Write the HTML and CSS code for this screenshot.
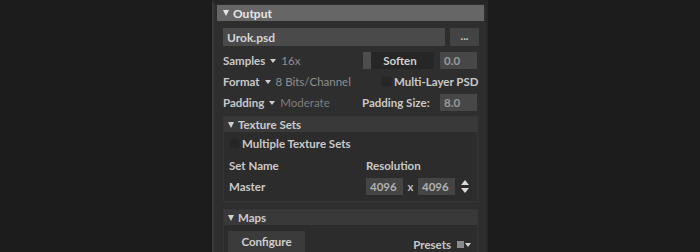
FILE: index.html
```html
<!DOCTYPE html>
<html>
<head>
<meta charset="utf-8">
<link rel="stylesheet" href="styles.css">
</head>
<body>
<div class="stage">
  <div class="panel">
    <div class="sec-head"><span class="tri"></span>Output</div>
    <div class="sec-body">
      <div class="file-row">
        <div class="field file">Urok.psd</div>
        <div class="btn dots">...</div>
      </div>
      <div class="grid-row r-samples">
        <div class="drop"><span class="lbl">Samples</span><span class="caret"></span><span class="val">16x</span></div>
        <div class="slider"><span class="handle"></span><span class="slider-text">Soften</span></div>
        <div class="field num">0.0</div>
      </div>
      <div class="grid-row r-format">
        <div class="drop"><span class="lbl">Format</span><span class="caret"></span><span class="val">8 Bits/Channel</span></div>
        <div class="check-wrap span2"><span class="box"></span><span class="lbl">Multi-Layer PSD</span></div>
      </div>
      <div class="grid-row r-padding">
        <div class="drop"><span class="lbl">Padding</span><span class="caret"></span><span class="val dim">Moderate</span></div>
        <div class="lbl psize">Padding Size:</div>
        <div class="field num">8.0</div>
      </div>

      <div class="sub">
        <div class="sub-head"><span class="tri small"></span>Texture Sets</div>
        <div class="sub-body">
          <div class="check-wrap cb-row"><span class="box"></span><span class="lbl">Multiple Texture Sets</span></div>
          <div class="res-row head-row">
            <span class="lbl">Set Name</span>
            <span class="lbl">Resolution</span>
          </div>
          <div class="res-row master-row">
            <span class="lbl">Master</span>
            <div class="res-fields">
              <div class="field res">4096</div>
              <span class="times">x</span>
              <div class="field res">4096</div>
              <span class="spin"><span class="up"></span><span class="down"></span></span>
            </div>
          </div>
        </div>
      </div>

      <div class="sub maps">
        <div class="sub-head"><span class="tri small"></span>Maps</div>
        <div class="maps-body">
          <div class="btn config">Configure</div>
          <div class="presets"><span class="lbl">Presets</span><span class="sq"></span><span class="caret"></span></div>
        </div>
      </div>
    </div>
  </div>
</div>
</body>
</html>
```

FILE: styles.css
```css
html, body {
  margin: 0;
  padding: 0;
  background: #1c1c1c;
}
.stage {
  width: 700px;
  height: 252px;
  overflow: hidden;
  font-family: "Lato", "Liberation Sans", sans-serif;
  font-size: 11.5px;
  font-weight: 700;
  color: #c9c9c9;
  white-space: nowrap;
}
.panel {
  margin-left: 212px;
  width: 276px;
  height: 252px;
  box-sizing: border-box;
  background: #2e2e2e;
  border-left: 2px solid #3a3a3a;
  border-right: 2px solid #262626;
  border-top: 4px solid #262626;
  padding: 1px 2px 0 3px;
}
.sec-head {
  height: 16px;
  background: #666666;
  color: #e6e6e6;
  font-size: 12px;
  display: flex;
  align-items: center;
  padding-left: 6px;
}
.tri {
  width: 0;
  height: 0;
  border-left: 3.5px solid transparent;
  border-right: 3.5px solid transparent;
  border-top: 6px solid #e6e6e6;
  margin-right: 4px;
}
.tri.small {
  border-left-width: 3px;
  border-right-width: 3px;
  border-top-width: 6px;
  border-top-color: #d0d0d0;
}
.sec-body {
  padding: 7px 6px 0 6px;
}
.file-row {
  display: flex;
  gap: 5px;
  height: 18px;
}
.field {
  background: #474747;
  color: #a8a8a8;
  display: flex;
  align-items: center;
  padding-left: 4px;
  box-sizing: border-box;
}
.field.file {
  flex: 1;
  background: #4a4a4a;
  color: #d4d4d4;
  font-size: 12px;
}
.btn {
  background: #434343;
  color: #cfcfcf;
  display: flex;
  align-items: center;
  justify-content: center;
}
.btn.dots {
  width: 29px;
  margin-right: -1px;
  font-size: 11px;
  padding-bottom: 3px;
  box-sizing: border-box;
}
.grid-row {
  display: grid;
  grid-template-columns: 140px 71px 6px 37px;
  align-items: center;
}
.r-samples {
  margin-top: 6px;
  height: 17px;
}
.r-samples .slider { grid-column: 2; }
.r-samples .num { grid-column: 4; height: 17px; }
.r-format { height: 25px; }
.r-format .span2 { grid-column: 2 / 5; padding-left: 18px; }
.r-padding { height: 17px; }
.r-padding .psize { grid-column: 2 / 4; margin-left: -1px; }
.r-padding .num { grid-column: 4; height: 17px; }
.num { color: #9a9a9a; }
.drop {
  display: flex;
  align-items: center;
}
.caret {
  width: 0;
  height: 0;
  border-left: 3px solid transparent;
  border-right: 3px solid transparent;
  border-top: 4px solid #cfcfcf;
  margin: 1px 5px 0 5px;
}
.val { color: #8e8e8e; font-weight: 400; }
.val.dim { color: #7e7e7e; }
.slider {
  height: 17px;
  background: #262626;
  position: relative;
  display: flex;
  align-items: center;
  justify-content: center;
}
.handle {
  position: absolute;
  left: 0;
  top: 0;
  width: 8px;
  height: 17px;
  background: #4d4d4d;
}
.slider-text { color: #d0d0d0; padding-left: 3px; }
.check-wrap {
  display: flex;
  align-items: center;
}
.box {
  width: 11px;
  height: 11px;
  background: #262626;
  border: 1px solid #2a2a2a;
  box-sizing: border-box;
  margin-right: 2px;
  flex: none;
}
.sub {
  margin-top: 5px;
  border: 1px solid #353535;
  background: #2c2c2c;
}
.sub-head {
  height: 15px;
  background: #393939;
  display: flex;
  align-items: center;
  padding-left: 4px;
  color: #cccccc;
}
.sub-body {
  padding: 0 5px 4px 5px;
}
.cb-row { height: 23px; }
.res-row {
  display: grid;
  grid-template-columns: 137px 1fr;
  align-items: center;
}
.head-row { height: 20px; }
.master-row { height: 22px; }
.res-fields {
  display: flex;
  align-items: center;
}
.field.res {
  width: 37px;
  height: 17px;
  background: #454545;
  color: #b0b0b0;
}
.times {
  width: 15px;
  text-align: center;
  color: #bdbdbd;
}
.spin {
  display: flex;
  flex-direction: column;
  gap: 3px;
  margin-left: 6px;
}
.up, .down {
  width: 0;
  height: 0;
  border-left: 4px solid transparent;
  border-right: 4px solid transparent;
}
.up { border-bottom: 5px solid #dadada; }
.down { border-top: 5px solid #dadada; }
.maps {
  margin-top: 7px;
}
.maps-body {
  display: flex;
  justify-content: space-between;
  align-items: flex-start;
  padding: 6px 6px 0 4px;
  height: 30px;
}
.btn.config {
  width: 77px;
  height: 30px;
  background: #3b3b3b;
  align-items: flex-start;
  padding-top: 4px;
  box-sizing: border-box;
}
.presets {
  display: flex;
  align-items: center;
  margin-top: 7px;
}
.sq {
  width: 7px;
  height: 7px;
  background: #8a8a8a;
  margin-left: 6px;
}
.presets .caret { margin: 1px 0 0 1px; }
```
